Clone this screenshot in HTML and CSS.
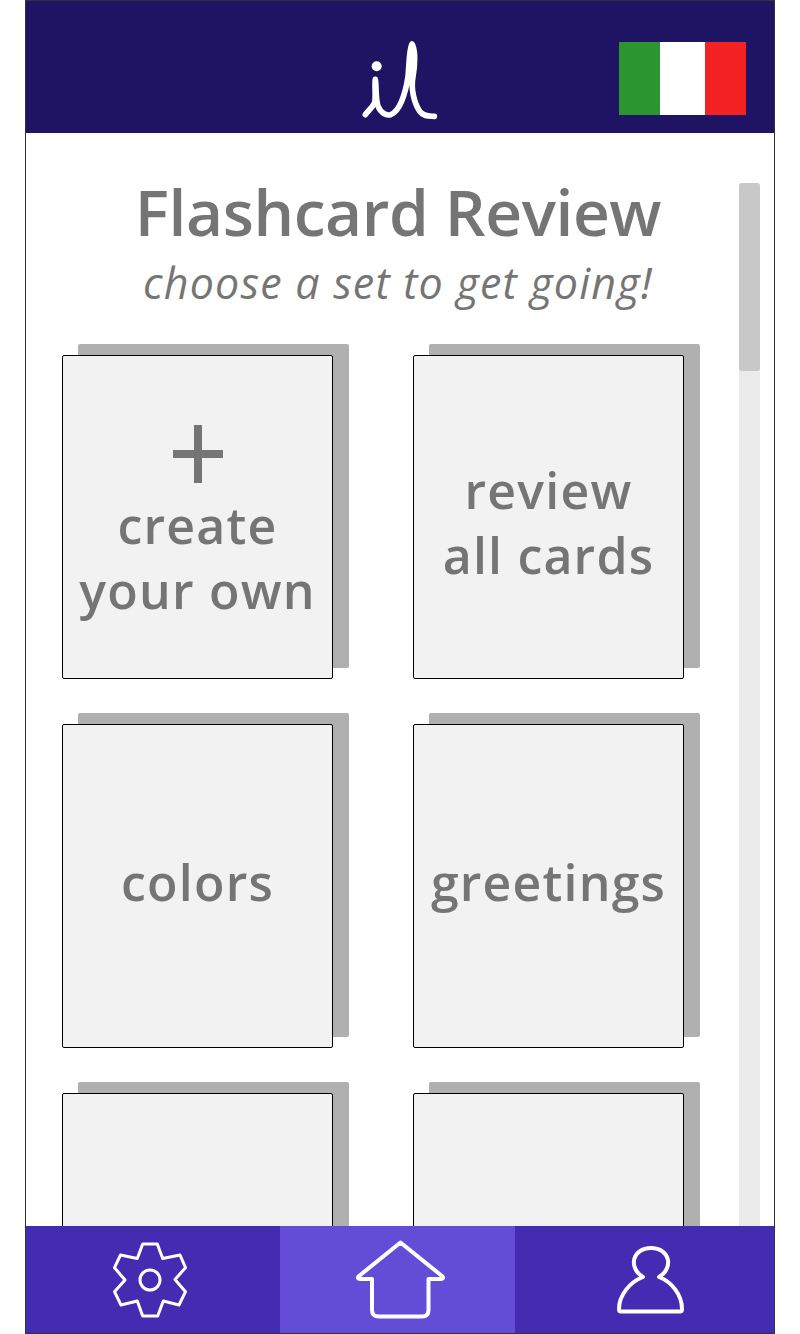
FILE: index.html
```html
<!DOCTYPE html>
<html lang="en">
<head>
  <meta charset="UTF-8">
  <title>Flashcard Review</title>
  <link rel="stylesheet" href="styles.css">
</head>
<body>
  <div class="phone">
    <!-- Top bar -->
    <header class="topbar">
      <span></span>
      <svg class="logo" viewBox="0 0 360 330" role="img" aria-label="il">
        <circle cx="110" cy="139" r="15" fill="#fff"/>
        <path class="logo-line" d="M76 284 C84 272 96 264 104 248 C108 225 103 195 106 178 C110 205 106 235 114 258 C122 278 138 288 152 284 C178 274 196 225 204 170 C208 130 207 90 216 72 C226 88 226 130 219 170 C212 205 222 250 240 275 C250 290 268 288 283 289"/>
      </svg>
      <div class="flag">
        <span class="flag-green"></span>
        <span class="flag-white"></span>
        <span class="flag-red"></span>
      </div>
    </header>

    <main class="content">
      <div class="scroll-area">
        <h1 class="title">Flashcard Review</h1>
        <p class="subtitle">choose a set to get going!</p>

        <div class="cards">
          <div class="card card-create">
            <svg class="plus" viewBox="0 0 50 58"><path d="M21 0h8v25h21v8H29v25h-8V33H0v-8h21z"/></svg>
            <span>create<br>your own</span>
          </div>
          <div class="card card-double"><span>review<br>all cards</span></div>
          <div class="card card-single"><span>colors</span></div>
          <div class="card card-single"><span>greetings</span></div>
          <div class="card"></div>
          <div class="card"></div>
        </div>
      </div>

      <div class="scrollbar"><div class="scrollbar-thumb"></div></div>
    </main>

    <!-- Bottom menu -->
    <nav class="bottom-nav">
      <div class="nav-item nav-settings">
        <svg class="nav-icon gear-icon" viewBox="0 0 80 80">
          <path d="M32.7 4H47.3L52.7 18.5 70 15 75.5 27.7 65 39.5 75.5 51.7 69 65 53.3 61 47.7 76H32.7L27.3 61 11 65 4.500 51.700 15 40 4.500 27.700 10.500 15 27.300 18.500Z"/>
          <circle cx="40" cy="40" r="10"/>
        </svg>
      </div>
      <div class="nav-item nav-home">
        <svg class="nav-icon home-icon" viewBox="0 0 100 90">
          <path d="M50.5 7.500 92 41Q94.500 43.500 91 44H78.500V75Q78.500 81.500 72 81.500H29Q22 81.500 22 75V44H10Q6.500 43.500 9 41Z"/>
        </svg>
      </div>
      <div class="nav-item nav-user">
        <svg class="nav-icon" viewBox="0 0 80 80">
          <path d="M33 37C18 28 22 8 41 8 60 8 64 28 49 37 62 42 72 55 72 69Q72 71.500 70 71.500H11Q9 71.500 9 69C9 55 20 42 33 37Z"/>
        </svg>
      </div>
    </nav>
  </div>
</body>
</html>
```

FILE: styles.css
```css
html, body {
  margin: 0;
  padding: 0;
  background-color: #fff;
}

.phone {
  display: flex;
  flex-direction: column;
  box-sizing: border-box;
  width: 750px;
  height: 1334px;
  margin-left: 25px;
  border: 1px solid #333;
  overflow: hidden;
  font-family: "Open Sans", "Noto Sans", sans-serif;
  color: #757575;
}

/* Top bar */
.topbar {
  display: grid;
  grid-template-columns: 1fr 120px 1fr;
  align-items: start;
  flex: none;
  height: 132px;
  background-color: #1f1463;
}

.logo {
  width: 120px;
  height: 110px;
  margin-top: 19px;
}

.logo-line {
  fill: none;
  stroke: #fff;
  stroke-width: 17;
  stroke-linecap: round;
  stroke-linejoin: round;
}

.flag {
  display: flex;
  justify-self: end;
  width: 127px;
  height: 73px;
  margin-top: 41px;
  margin-right: 28px;
}

.flag-green { width: 41px; background-color: #2b952f; }
.flag-white { width: 45px; background-color: #fff; }
.flag-red { width: 41px; background-color: #f42222; }

/* Middle part */
.content {
  display: flex;
  flex: 1;
  min-height: 0;
}

.scroll-area {
  width: 713px;
  padding-left: 36px;
  box-sizing: border-box;
}

.title {
  margin: 44px 0 0;
  width: 672px;
  text-align: center;
  font-size: 64px;
  line-height: 70px;
  font-weight: 600;
  letter-spacing: -0.4px;
}

.subtitle {
  margin: 3px 0 0;
  width: 672px;
  text-align: center;
  font-size: 43px;
  line-height: 66px;
  font-style: italic;
  letter-spacing: 1.2px;
}

.cards {
  display: grid;
  grid-template-columns: 271px 271px;
  grid-auto-rows: 324px;
  gap: 45px 80px;
  margin-top: 39px;
}

.card {
  display: flex;
  flex-direction: column;
  align-items: center;
  justify-content: center;
  box-sizing: border-box;
  border: 1px solid #000;
  border-radius: 2px;
  background-color: #f2f2f2;
  box-shadow: 16px -11px 0 #b0b0b0;
  text-align: center;
  font-size: 50px;
  line-height: 65px;
  font-weight: 600;
  letter-spacing: 1.2px;
}

.card-create {
  justify-content: flex-start;
  padding-top: 69px;
}

.card-double {
  padding-top: 11px;
}

.card-single {
  padding-bottom: 8px;
}

.plus {
  width: 50px;
  height: 58px;
  fill: #757575;
  margin-bottom: 10px;
}

.scrollbar {
  width: 21px;
  margin-top: 50px;
  background-color: #ebebeb;
  border-radius: 3px 3px 0 0;
}

.scrollbar-thumb {
  height: 188px;
  background-color: #c8c8c8;
  border-radius: 3px;
}

/* Bottom menu */
.bottom-nav {
  display: flex;
  flex: none;
  height: 107px;
  background-color: #432cb1;
}

.nav-item {
  display: flex;
  align-items: flex-start;
  box-sizing: border-box;
  padding-top: 14px;
}

.nav-settings { width: 254px; padding-left: 84px; }
.nav-home { width: 235px; padding-left: 70px; padding-top: 9px; background-color: #644dd6; }
.nav-user { width: 259px; padding-left: 95px; }

.nav-icon {
  width: 80px;
  height: 80px;
  fill: none;
  stroke: #fff;
  stroke-width: 4;
  stroke-linejoin: round;
}

.gear-icon {
  stroke-width: 3;
}

.home-icon {
  width: 100px;
  height: 90px;
}
```
